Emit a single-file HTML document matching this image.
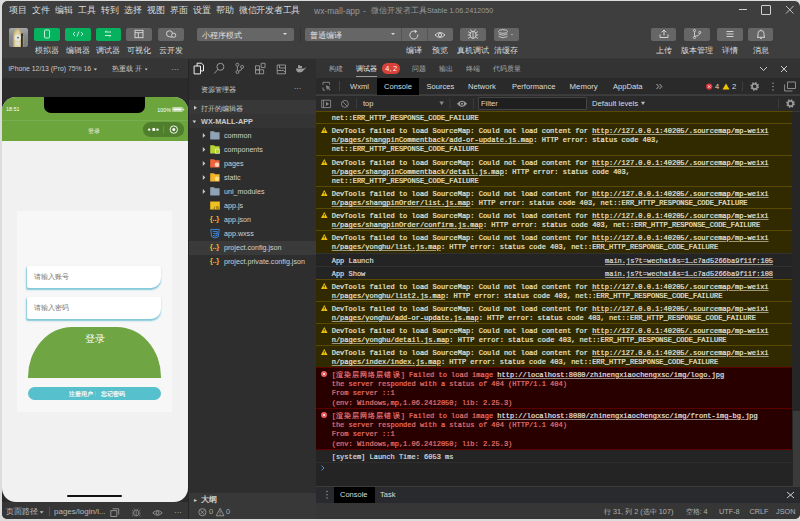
<!DOCTYPE html>
<html><head><meta charset="utf-8">
<style>
*{margin:0;padding:0;box-sizing:border-box}
html,body{width:800px;height:521px;overflow:hidden;background:#dcdcdc;font-family:"Liberation Sans",sans-serif;position:relative}
.a{position:absolute}
.t{position:absolute;white-space:nowrap;color:#dadada;font-size:8.5px;line-height:10px}
.btn{position:absolute;top:27px;height:14px;width:26px;border-radius:2px;background:#666}
.g{background:#07b25f}
.lbl{position:absolute;top:45.8px;font-size:7.7px;line-height:10px;color:#dcdcdc;white-space:nowrap}
.m{position:absolute;white-space:pre;font-family:"Liberation Mono",monospace;font-size:7px;line-height:9.3px;-webkit-text-stroke:0.2px}
.w{color:#ebe8da}
.e{color:#e47474}
.i{color:#dcdcdc}
u{text-decoration:underline;text-decoration-color:rgba(230,223,198,.6);text-underline-offset:1px}
.e u{color:#e2e2e2;text-decoration-color:rgba(220,220,220,.6)}
.cj{letter-spacing:1.1px}
svg{position:absolute;overflow:visible}
.dt{position:absolute;white-space:nowrap;color:#dcdcdc;font-size:7.5px;line-height:10px}
.ft{position:absolute;white-space:nowrap;color:#cccccc;font-size:8px;line-height:10px}
</style></head>
<body>

<div style="position:absolute;left:0;top:0;width:800px;height:521px;clip-path:inset(1px 0px 2px 2px round 5px)">
<div class="a" style="left:2px;top:1px;width:798px;height:518px;background:#3e3e3e;border-radius:5px;overflow:hidden">
</div>
<div class="t" style="left:9px;top:5px;letter-spacing:-0.3px">项目</div>
<div class="t" style="left:32px;top:5px;letter-spacing:-0.3px">文件</div>
<div class="t" style="left:55px;top:5px;letter-spacing:-0.3px">编辑</div>
<div class="t" style="left:78px;top:5px;letter-spacing:-0.3px">工具</div>
<div class="t" style="left:101px;top:5px;letter-spacing:-0.3px">转到</div>
<div class="t" style="left:124px;top:5px;letter-spacing:-0.3px">选择</div>
<div class="t" style="left:147px;top:5px;letter-spacing:-0.3px">视图</div>
<div class="t" style="left:170px;top:5px;letter-spacing:-0.3px">界面</div>
<div class="t" style="left:193px;top:5px;letter-spacing:-0.3px">设置</div>
<div class="t" style="left:216px;top:5px;letter-spacing:-0.3px">帮助</div>
<div class="t" style="left:239px;top:5px;letter-spacing:-0.3px">微信开发者工具</div>
<div class="t" style="left:314px;top:5.5px;color:#9a9a9a">wx-mall-app</div><div class="t" style="left:363px;top:5.5px;color:#9a9a9a">-</div><div class="t" style="left:371px;top:6px;color:#9a9a9a;font-size:7.5px">微信开发者工具</div><div class="t" style="left:427px;top:6px;color:#9a9a9a;font-size:7.2px">Stable 1.06.2412050</div>
<div class="a" style="left:739px;top:9px;width:8px;height:1px;background:#d0d0d0"></div>
<div class="a" style="left:761px;top:5px;width:10px;height:10px;border:1px solid #d0d0d0;border-radius:1px"></div>
<svg style="left:785.5px;top:6px" width="8" height="8"><path d="M0 0L7.5 7.5M7.5 0L0 7.5" stroke="#d0d0d0" stroke-width="0.9"/></svg>
<div class="a" style="left:8.8px;top:27.5px;width:19px;height:19px;border-radius:2px;overflow:hidden;background:linear-gradient(180deg,#a8a8a8,#8a8a8a 40%,#7c7c7c)"><svg style="left:0;top:0" width="19" height="19"><path d="M4.3 19V6Q5.5 1 8.7 0Q11.5 1 12.4 6V19Z" fill="#c9b37a"/><path d="M5.5 19V7Q6.5 3 8.7 2Q10.5 3 11.4 7V19Z" fill="#ddd0a0"/><circle cx="8.7" cy="9.7" r="3.2" fill="#e6e6e0"/><circle cx="9" cy="9.6" r="0.9" fill="#555"/><ellipse cx="8.7" cy="15.5" rx="2.6" ry="2" fill="#e0ddd0"/><path d="M12.2 5.5H13.8V19H12.2Z" fill="#151515"/><path d="M13.8 8H14.6V19H13.8Z" fill="#b09a60"/></svg></div>
<div class="btn g" style="left:34px;top:27.5px;width:26px;height:13.5px"></div>
<svg style="left:32.0px;top:19.25px" width="30" height="30"><g transform="translate(15 15)"><rect x="-2.5" y="-4" width="5" height="8" rx="1" fill="none" stroke="#d9f5e6" stroke-width="0.9"/></g></svg>
<div class="lbl" style="left:22.0px;width:50px;text-align:center">模拟器</div>
<div class="btn g" style="left:65px;top:27.5px;width:25.5px;height:13.5px"></div>
<svg style="left:62.75px;top:19.25px" width="30" height="30"><g transform="translate(15 15)"><path d="M-3 -2L-5 0L-3 2M3 -2L5 0L3 2M1 -2.5L-1 2.5" fill="none" stroke="#d9f5e6" stroke-width="0.9"/></g></svg>
<div class="lbl" style="left:52.75px;width:50px;text-align:center">编辑器</div>
<div class="btn g" style="left:95.6px;top:27.5px;width:25.5px;height:13.5px"></div>
<svg style="left:93.35px;top:19.25px" width="30" height="30"><g transform="translate(15 15)"><path d="M-3 -2H3M-3 -2L-1.5 -3.2M3 1.5H-3M3 1.5L1.5 2.7" fill="none" stroke="#d9f5e6" stroke-width="0.9"/></g></svg>
<div class="lbl" style="left:83.35px;width:50px;text-align:center">调试器</div>
<div class="btn" style="left:126.2px;top:27.5px;width:25.6px;height:13.5px"></div>
<svg style="left:124.0px;top:19.25px" width="30" height="30"><g transform="translate(15 15)"><rect x="-4" y="-3.7" width="8" height="7.4" fill="none" stroke="#ddd" stroke-width="0.9"/><path d="M-4 -1.3H4M-0.7 -1.3V3.7" stroke="#ddd" stroke-width="0.9"/></g></svg>
<div class="lbl" style="left:114.0px;width:50px;text-align:center">可视化</div>
<div class="btn" style="left:158px;top:27.5px;width:25.6px;height:13.5px"></div>
<svg style="left:155.8px;top:19.25px" width="30" height="30"><g transform="translate(15 15)"><path d="M-1.3 2.75A3 3 0 1 1 1.5 -0.2" fill="none" stroke="#ddd" stroke-width="0.9"/><circle cx="2.7" cy="1.25" r="2.1" fill="none" stroke="#ddd" stroke-width="0.9"/><path d="M-1.3 2.75L1 3.3" stroke="#ddd" stroke-width="0.9"/></g></svg>
<div class="lbl" style="left:145.8px;width:50px;text-align:center">云开发</div>
<div class="a" style="left:197px;top:27.7px;width:97px;height:13.5px;border-radius:2px;background:#666"></div>
<div class="t" style="left:202px;top:31px;color:#e0e0e0;font-size:7.7px">小程序模式</div>
<div class="a" style="left:300px;top:27px;width:0.8px;height:15px;background:#353535"></div>
<div class="a" style="left:283px;top:33px;border-left:2px solid transparent;border-right:2px solid transparent;border-top:2px solid #ddd"></div>
<div class="a" style="left:304.5px;top:27.7px;width:148px;height:13.3px;border-radius:2px;background:#666"></div>
<div class="a" style="left:401px;top:27.7px;width:0.7px;height:13.3px;background:#555"></div>
<div class="a" style="left:427px;top:27.7px;width:0.7px;height:13.3px;background:#555"></div>
<div class="t" style="left:310px;top:31px;color:#e0e0e0;font-size:7.7px">普通编译</div>
<div class="a" style="left:391px;top:33px;border-left:2px solid transparent;border-right:2px solid transparent;border-top:2px solid #ddd"></div>
<svg style="left:399px;top:19.5px" width="30" height="30"><g transform="translate(15 15)"><path d="M3.8 -0.5A4 4 0 1 1 1.5 -3.6" fill="none" stroke="#ddd" stroke-width="0.9"/><path d="M0.8 -5.2L3.2 -3.4L0.8 -1.8Z" fill="#ddd"/></g></svg>
<svg style="left:425px;top:19.799999999999997px" width="30" height="30"><g transform="translate(15 15)"><path d="M-5 0Q0 -5 5 0Q0 5 -5 0Z" fill="none" stroke="#ddd" stroke-width="0.9"/><circle cx="0" cy="0" r="1.6" fill="none" stroke="#ddd" stroke-width="0.9"/></g></svg>
<div class="lbl" style="left:389px;width:50px;text-align:center">编译</div>
<div class="lbl" style="left:415px;width:50px;text-align:center">预览</div>
<div class="btn" style="left:460.3px;top:27.7px;width:25.5px;height:13.3px"></div>
<svg style="left:458.05px;top:19.35px" width="30" height="30"><g transform="translate(15 15)"><ellipse cx="0" cy="0.8" rx="3" ry="3.6" fill="none" stroke="#ddd" stroke-width="0.9"/><path d="M0 -2.5V4.4M-3 -1L-5 -2.5M3 -1L5 -2.5M-3 1H-5.2M3 1H5.2M-3 3L-5 4.5M3 3L5 4.5M-1.5 -3L-2.5 -4.5M1.5 -3L2.5 -4.5" stroke="#ddd" stroke-width="0.8" fill="none"/></g></svg>
<div class="lbl" style="left:448.05px;width:50px;text-align:center">真机调试</div>
<div class="btn" style="left:493.7px;top:27.7px;width:25.5px;height:13.3px"></div>
<svg style="left:488px;top:19.4px" width="30" height="30"><g transform="translate(15 15)"><ellipse cx="0" cy="-2.5" rx="4.5" ry="1.8" fill="none" stroke="#ddd" stroke-width="0.8"/><path d="M-4.5 0Q0 2.5 4.5 0M-4.5 2.5Q0 5 4.5 2.5" fill="none" stroke="#ddd" stroke-width="0.8"/></g></svg>
<div class="lbl" style="left:481.45px;width:50px;text-align:center">清缓存</div>
<div class="a" style="left:511px;top:33.5px;border-left:1.5px solid transparent;border-right:1.5px solid transparent;border-top:1.8px solid #ddd"></div>
<div class="btn" style="left:651px;top:27.5px;width:25.4px;height:13.5px"></div>
<svg style="left:648.7px;top:19.25px" width="30" height="30"><g transform="translate(15 15)"><path d="M0 1.5V-4M-2.2 -1.8L0 -4L2.2 -1.8M-4 0.5V3.5H4V0.5" fill="none" stroke="#ddd" stroke-width="0.9"/></g></svg>
<div class="lbl" style="left:638.7px;width:50px;text-align:center">上传</div>
<div class="btn" style="left:684px;top:27.5px;width:25.6px;height:13.5px"></div>
<svg style="left:681.8px;top:19.25px" width="30" height="30"><g transform="translate(15 15)"><circle cx="-2.5" cy="-3.5" r="1.1" fill="none" stroke="#ddd" stroke-width="0.8"/><circle cx="-2.5" cy="3.5" r="1.1" fill="none" stroke="#ddd" stroke-width="0.8"/><circle cx="2.8" cy="-1.5" r="1.1" fill="none" stroke="#ddd" stroke-width="0.8"/><path d="M-2.5 -2.4V2.4M2.8 -0.4Q2.5 2 -2.3 2.4" fill="none" stroke="#ddd" stroke-width="0.8"/></g></svg>
<div class="lbl" style="left:671.8px;width:50px;text-align:center">版本管理</div>
<div class="btn" style="left:717px;top:27.5px;width:26px;height:13.5px"></div>
<svg style="left:715.0px;top:19.25px" width="30" height="30"><g transform="translate(15 15)"><path d="M-3.5 -2.5H3.5M-3.5 0H3.5M-3.5 2.5H3.5" stroke="#ddd" stroke-width="0.9"/></g></svg>
<div class="lbl" style="left:705.0px;width:50px;text-align:center">详情</div>
<div class="btn" style="left:748px;top:27.5px;width:25.4px;height:13.5px"></div>
<svg style="left:745.7px;top:19.25px" width="30" height="30"><g transform="translate(15 15)"><path d="M-3 2.5V-0.5A3 3 0 0 1 3 -0.5V2.5L4 3.3H-4Z M-1 4.3H1" fill="none" stroke="#ddd" stroke-width="0.9"/><path d="M0 -3.5V-4.3" stroke="#ddd" stroke-width="0.9"/></g></svg>
<div class="lbl" style="left:735.7px;width:50px;text-align:center">消息</div>
<div class="a" style="left:2px;top:58px;width:798px;height:1px;background:#383838"></div>
<div class="a" style="left:2px;top:59px;width:186px;height:19.5px;background:#353535"></div>
<div class="a" style="left:2px;top:78px;width:186px;height:424px;background:#2b2b2b"></div>
<div class="ft" style="left:8.6px;top:64.2px;color:#c8c8c8;font-size:6.85px">iPhone 12/13 (Pro) 75% 16</div>
<svg style="left:0;top:0" width="800" height="521"><path d="M93.6 68.6H97.2L95.4 70.6Z" fill="#c8c8c8"/><path d="M144.8 68.6H147.6L146.2 70.6Z" fill="#c8c8c8"/><path d="M39.6 511.2H43.6L41.6 513.4Z" fill="#bbb"/></svg>
<div class="ft" style="left:112px;top:64.3px;color:#c8c8c8;font-size:7px">热重载 开</div>
<div class="ft" style="left:171px;top:65px;color:#c8c8c8">···</div>
<div class="a" style="left:2px;top:97px;width:186px;height:405px;background:#f1f1f1;border-radius:14px;overflow:hidden">
<div class="a" style="left:0;top:0;width:186px;height:44px;background:#6ba53c"></div>
<div class="a" style="left:0;top:23px;width:186px;height:1px;background:#78ad50"></div>
</div>
<div class="a" style="left:44px;top:97px;width:101px;height:16px;background:#000;border-radius:0 0 7px 7px"></div>
<div class="a" style="left:6px;top:105.2px;font-size:5.4px;color:#fff;line-height:8px">18:51</div>
<div class="a" style="left:157.3px;top:105.5px;font-size:5.3px;color:#fff;line-height:8px">100%</div>
<svg style="left:0;top:0" width="800" height="521"><rect x="172.3" y="107.5" width="10.4" height="3.9" rx="0.8" fill="none" stroke="#fff" stroke-width="0.6"/><rect x="173.2" y="108.3" width="8.6" height="2.3" fill="#fff"/><path d="M183.2 108.5L184.6 109.45L183.2 110.4Z" fill="#fff"/></svg>
<div class="a" style="left:88px;top:126.5px;font-size:6.4px;color:#fff;line-height:8px">登录</div>
<div class="a" style="left:143.1px;top:122.3px;width:41.1px;height:14.5px;background:#4f7e2c;border-radius:7.3px"></div>
<svg style="left:0;top:0" width="800" height="521"><circle cx="149.2" cy="129.6" r="1.2" fill="#fff"/><rect x="152.3" y="128.1" width="2.9" height="2.9" rx="0.7" fill="#fff"/><circle cx="157.5" cy="129.6" r="1.2" fill="#fff"/><path d="M163.5 125.8V133.8" stroke="#7a9e5c" stroke-width="0.6"/><circle cx="173.8" cy="129.6" r="3.7" fill="none" stroke="#fff" stroke-width="0.9"/><circle cx="173.8" cy="129.6" r="1.5" fill="#fff"/></svg>
<div class="a" style="left:16.5px;top:210.5px;width:155.8px;height:201px;background:#f7f7f7"></div>
<div class="a" style="left:27px;top:266px;width:134px;height:22px;background:#fff;border-radius:2px 2px 10px 2px;box-shadow:-0.5px 1.5px 1.5px rgba(90,185,205,.75)"></div>
<div class="a" style="left:34px;top:272px;font-size:7px;color:#777;line-height:10px">请输入账号</div>
<div class="a" style="left:27px;top:297px;width:134px;height:22px;background:#fff;border-radius:2px 2px 10px 2px;box-shadow:-0.5px 1.5px 1.5px rgba(90,185,205,.75)"></div>
<div class="a" style="left:34px;top:303px;font-size:7px;color:#777;line-height:10px">请输入密码</div>
<div class="a" style="left:28px;top:327px;width:133px;height:51px;background:#6fa542;border-radius:44px 44px 0 0/50px 50px 0 0"></div>
<div class="a" style="left:85px;top:333px;font-size:10px;color:#fff;line-height:12px">登录</div>
<div class="a" style="left:28px;top:387px;width:133px;height:13px;background:#56c0cc;border-radius:7px"></div>
<div class="a" style="left:68.5px;top:390px;font-size:5.7px;color:#fff;line-height:8px;font-weight:bold">注册用户</div>
<div class="a" style="left:95.2px;top:390.5px;width:0.7px;height:6.5px;background:#9ab8bc"></div>
<div class="a" style="left:101px;top:390px;font-size:5.7px;color:#fff;line-height:8px;font-weight:bold">忘记密码</div>
<div class="a" style="left:67px;top:495px;width:55px;height:2px;background:#111;border-radius:1px"></div>
<div class="a" style="left:2px;top:502px;width:186px;height:17px;background:#363636"></div>
<div class="ft" style="left:6px;top:507px;color:#bbb;font-size:7.8px">页面路径</div>
<svg style="left:0;top:0" width="800" height="521"><path d="M39.6 511.2H43.6L41.6 513.4Z" fill="#bbb"/></svg>
<div class="a" style="left:49px;top:507px;width:1px;height:9px;background:#555"></div>
<div class="ft" style="left:54px;top:507px;color:#bbb">pages/login/l...</div>
<div class="ft" style="left:174px;top:507.5px;color:#bbb">···</div>
<svg style="left:0;top:0" width="800" height="521"><path d="M112.5 508.8H118.7V514.5M110.8 510.6H116.8V516.5H110.8Z" fill="none" stroke="#9a9a9a" stroke-width="0.9"/><g transform="translate(136.2 512.3) scale(0.85)"><ellipse cx="0" cy="0.8" rx="3" ry="3.6" fill="none" stroke="#9a9a9a" stroke-width="0.9"/><path d="M0 -2.5V4.4M-3 -1L-5 -2.5M3 -1L5 -2.5M-3 1H-5.2M3 1H5.2M-3 3L-5 4.5M3 3L5 4.5M-1.5 -3L-2.5 -4.5M1.5 -3L2.5 -4.5" stroke="#9a9a9a" stroke-width="0.8" fill="none"/></g><g transform="translate(157.5 512.9) scale(0.95)"><path d="M-5 0Q0 -5 5 0Q0 5 -5 0Z" fill="none" stroke="#9a9a9a" stroke-width="0.9"/><circle cx="0" cy="0" r="1.6" fill="none" stroke="#9a9a9a" stroke-width="0.9"/></g></svg>
<div class="a" style="left:188px;top:59px;width:1px;height:460px;background:#262626"></div>
<div class="a" style="left:189px;top:59px;width:127px;height:460px;background:#2e2e2e"></div>
<div class="a" style="left:189px;top:100px;width:127px;height:14px;background:#383838"></div>
<div class="a" style="left:189px;top:114px;width:127px;height:14px;background:#343434"></div>
<div class="ft" style="left:201px;top:84.5px;font-size:7.2px">资源管理器</div>
<div class="ft" style="left:294px;top:84px;font-size:7px">···</div>
<svg style="left:0;top:0" width="800" height="521"><path d="M194 105.8L197 107.8L194 109.8Z" fill="#c8c8c8"/><path d="M192.5 120.5H196.2L194.35 123.2Z" fill="#c8c8c8"/></svg>
<div class="ft" style="left:201px;top:103.8px;font-size:7.2px">打开的编辑器</div>
<div class="ft" style="left:201px;top:116.8px;font-weight:bold;font-size:7.3px">WX-MALL-APP</div>
<svg style="left:0;top:0" width="800" height="521"><path d="M197.1 66V63.2H201.5L203.5 65.2V70.9H200.5" fill="none" stroke="#eee" stroke-width="1"/><path d="M194.1 66H200.5V73.9H194.1Z" fill="none" stroke="#eee" stroke-width="1"/><circle cx="220.4" cy="66.8" r="3.5" fill="none" stroke="#9a9a9a" stroke-width="1"/><path d="M217.9 69.3L214.4 73.5" stroke="#9a9a9a" stroke-width="1"/><circle cx="237.4" cy="64.7" r="1.5" fill="none" stroke="#9a9a9a" stroke-width="0.9"/><circle cx="237.4" cy="72" r="1.5" fill="none" stroke="#9a9a9a" stroke-width="0.9"/><circle cx="242.1" cy="66.9" r="1.5" fill="none" stroke="#9a9a9a" stroke-width="0.9"/><path d="M237.4 66.2V70.5M242.1 68.4Q242 70.5 238.5 71" fill="none" stroke="#9a9a9a" stroke-width="0.9"/><path d="M255.5 65.8H259.5V69.8H255.5ZM255.5 69.8H259.5V73.8H255.5ZM259.5 69.8H263.6V73.8H259.5ZM261.2 63.3H265V67.6H261.2Z" fill="none" stroke="#9a9a9a" stroke-width="0.9"/><path d="M277.2 65H285.5V73.8H277.2Z M279.5 65V68H285.5 M277.2 70.5H283.5L285.5 72.5" fill="none" stroke="#9a9a9a" stroke-width="0.9"/><path d="M296 68.5H304.5Q305 67 306 67.5Q305.5 69 304.5 69.5Q302.5 72.5 299 72.4Q296 72 296 68.5Z M298 68H302V66H300V65.2H298Z" fill="#9a9a9a"/></svg>
<svg style="left:0;top:0" width="800" height="521"><path d="M202.8 133.1L205.3 135.6L202.8 138.1Z" fill="#c8c8c8"/><path d="M210.2 131.3H214L215 132.3H219.6V139.4H210.2Z" fill="#8fa3b5"/>
</svg>
<div class="ft" style="left:224px;top:131.4px;font-size:7.15px;color:#d0d0d0">common</div>
<svg style="left:0;top:0" width="800" height="521"><path d="M202.8 147.1L205.3 149.6L202.8 152.1Z" fill="#c8c8c8"/><path d="M210.2 145.3H214L215 146.3H219.6V153.4H210.2Z" fill="#b7d432"/>
<path d="M215.5 149.1H219.5V153.4H215.5Z" fill="none" stroke="#fff" stroke-width="0.6"/>
</svg>
<div class="ft" style="left:224px;top:145.4px;font-size:7.15px;color:#d0d0d0">components</div>
<svg style="left:0;top:0" width="800" height="521"><path d="M202.8 161.1L205.3 163.6L202.8 166.1Z" fill="#c8c8c8"/><path d="M210.2 159.3H214L215 160.3H219.6V167.4H210.2Z" fill="#f0643c"/>
<circle cx="217" cy="164.8" r="2.3" fill="#fbd1c0"/>
</svg>
<div class="ft" style="left:224px;top:159.4px;font-size:7.15px;color:#d0d0d0">pages</div>
<svg style="left:0;top:0" width="800" height="521"><path d="M202.8 175.1L205.3 177.6L202.8 180.1Z" fill="#c8c8c8"/><path d="M210.2 173.3H214L215 174.3H219.6V181.4H210.2Z" fill="#f5b32a"/>
<circle cx="217" cy="178.8" r="2.2" fill="#ffe08a"/>
</svg>
<div class="ft" style="left:224px;top:173.4px;font-size:7.15px;color:#d0d0d0">static</div>
<svg style="left:0;top:0" width="800" height="521"><path d="M202.8 189.1L205.3 191.6L202.8 194.1Z" fill="#c8c8c8"/><path d="M210.2 187.3H214L215 188.3H219.6V195.4H210.2Z" fill="#8fa3b5"/>
</svg>
<div class="ft" style="left:224px;top:187.4px;font-size:7.15px;color:#d0d0d0">uni_modules</div>
<svg style="left:0;top:0" width="800" height="521"><path d="M210.2 201.6H219.8V209.6H210.2Z" fill="#f0c020"/><path d="M214.5 206.6V208.6H213.3M218.5 206.6H216.3V207.6H218.5V208.6H216.3" fill="none" stroke="#6a5000" stroke-width="0.5"/></svg>
<div class="ft" style="left:224px;top:201.4px;font-size:7.15px;color:#d0d0d0">app.js</div>
<div class="ft" style="left:209.8px;top:214.1px;color:#f0b429;font-size:7.8px;font-weight:bold;letter-spacing:-0.3px">{..}</div>
<div class="ft" style="left:224px;top:215.4px;font-size:7.15px;color:#d0d0d0">app.json</div>
<svg style="left:0;top:0" width="800" height="521"><path d="M210.8 229.4H219.2L218.4 236.6L215 238.0L211.6 236.6Z" fill="none" stroke="#3d8eea" stroke-width="0.9"/><path d="M212.8 231.4H217.2L217 235.4L215 236.1L213 235.4M213.2 233.6H217" fill="none" stroke="#3d8eea" stroke-width="0.9"/></svg>
<div class="ft" style="left:224px;top:229.4px;font-size:7.15px;color:#d0d0d0">app.wxss</div>
<div class="a" style="left:189px;top:240.6px;width:127px;height:14px;background:#3a3a3a"></div>
<div class="ft" style="left:209.8px;top:242.1px;color:#f0b429;font-size:7.8px;font-weight:bold;letter-spacing:-0.3px">{..}</div>
<div class="ft" style="left:224px;top:243.4px;font-size:7.15px;color:#d0d0d0">project.config.json</div>
<div class="ft" style="left:209.8px;top:256.1px;color:#f0b429;font-size:7.8px;font-weight:bold;letter-spacing:-0.3px">{..}</div>
<div class="ft" style="left:224px;top:257.4px;font-size:7.15px;color:#d0d0d0">project.private.config.json</div>
<div class="a" style="left:189px;top:493px;width:127px;height:14px;background:#383838"></div>
<div class="ft" style="left:194px;top:495px;font-size:6px">▸</div>
<div class="ft" style="left:201px;top:495px;font-weight:bold">大纲</div>
<div class="a" style="left:189px;top:507px;width:127px;height:12px;background:#383838"></div>
<svg style="left:0;top:0" width="800" height="521"><circle cx="202.4" cy="512.2" r="3.6" fill="none" stroke="#9a9a9a" stroke-width="0.9"/><path d="M200.6 510.4L204.2 514M204.2 510.4L200.6 514" stroke="#9a9a9a" stroke-width="0.9"/><path d="M220.1 508.4L224 515.8H216.2Z" fill="none" stroke="#9a9a9a" stroke-width="0.9"/><path d="M220.1 510.8V513.3M220.1 514V514.8" stroke="#9a9a9a" stroke-width="0.8"/></svg>
<div class="ft" style="left:209px;top:507px;color:#aaa;font-size:7.5px">0</div>
<div class="ft" style="left:226px;top:507px;color:#aaa;font-size:7.5px">0</div>
<div class="a" style="left:316px;top:59px;width:484px;height:19px;background:#333"></div>
<div class="ft" style="left:329px;top:63.5px;color:#aaa;font-size:7px">构建</div>
<div class="ft" style="left:356px;top:63.5px;color:#eee;font-size:7px">调试器</div>
<div class="ft" style="left:412px;top:63.5px;color:#aaa;font-size:7px">问题</div>
<div class="ft" style="left:439px;top:63.5px;color:#aaa;font-size:7px">输出</div>
<div class="ft" style="left:466px;top:63.5px;color:#aaa;font-size:7px">终端</div>
<div class="ft" style="left:493px;top:63.5px;color:#aaa;font-size:7px">代码质量</div>
<div class="a" style="left:355.6px;top:76px;width:21.4px;height:1.3px;background:#999"></div>
<div class="a" style="left:382px;top:63px;width:17.6px;height:10.6px;background:#d8413b;border-radius:5.3px"></div>
<div class="ft" style="left:385.3px;top:63.5px;color:#fff;font-size:7.3px;word-spacing:-1px;letter-spacing:0.2px">4, 2</div>
<svg style="left:760px;top:67px" width="7" height="4"><path d="M0 0L3.5 3.5L7 0" stroke="#ccc" fill="none" stroke-width="1"/></svg>
<svg style="left:781px;top:66px" width="6" height="6"><path d="M0 0L6 6M6 0L0 6" stroke="#ccc" stroke-width="1"/></svg>
<div class="a" style="left:316px;top:78px;width:484px;height:17px;background:#2a2a2b;border-bottom:1px solid #3a3a3a"></div>
<div class="a" style="left:377px;top:78px;width:42px;height:17px;background:#000"></div>
<div class="a" style="left:338.5px;top:81px;width:0.8px;height:10px;background:#444"></div>
<div class="dt" style="left:350px;top:82px;font-size:7.6px">Wxml</div>
<div class="dt" style="left:384px;top:82px;font-size:7.6px">Console</div>
<div class="dt" style="left:426.4px;top:82px;font-size:7.6px">Sources</div>
<div class="dt" style="left:468px;top:82px;font-size:7.6px">Network</div>
<div class="dt" style="left:512px;top:82px;font-size:7.6px">Performance</div>
<div class="dt" style="left:569.6px;top:82px;font-size:7.8px">Memory</div>
<div class="dt" style="left:613px;top:82px;font-size:7.6px">AppData</div>
<svg style="left:0;top:0" width="800" height="521"><path d="M323 85V82.3H329.5V84.5M323 87.5V90.2H325" fill="none" stroke="#8a8a8a" stroke-width="0.9"/><path d="M325.8 85.3L330.5 87L328.6 87.8L330.6 89.8L329.8 90.6L327.8 88.6L327 90.5Z" fill="#8a8a8a"/><path d="M656.5 84L658.8 86.5L656.5 89M659.5 84L661.8 86.5L659.5 89" fill="none" stroke="#bbb" stroke-width="0.9"/><circle cx="709.2" cy="86.6" r="3.1" fill="#e4343c"/><path d="M708 85.4L710.4 87.8M710.4 85.4L708 87.8" stroke="#fff" stroke-width="0.8"/><path d="M726 83.6L729.5 89.4H722.5Z" fill="#f5c400"/><path d="M742.5 81.5V91" stroke="#444" stroke-width="0.8"/><circle cx="754.7" cy="86.4" r="3.3" fill="none" stroke="#9a9a9a" stroke-width="2.2" stroke-dasharray="1.3 1.29"/><circle cx="754.7" cy="86.4" r="2.6" fill="none" stroke="#9a9a9a" stroke-width="1.6"/><circle cx="773" cy="83.2" r="0.75" fill="#9a9a9a"/><circle cx="773" cy="86.6" r="0.75" fill="#9a9a9a"/><circle cx="773" cy="90" r="0.75" fill="#9a9a9a"/><path d="M787.5 82H795.5V88.5H787.5Z" fill="none" stroke="#8a8a8a" stroke-width="1"/><path d="M784.6 84.5V91H792.5" fill="none" stroke="#8a8a8a" stroke-width="1"/></svg>
<div class="dt" style="left:715px;top:82px;">4</div>
<div class="dt" style="left:732px;top:82px;">2</div>
<div class="a" style="left:316px;top:95.5px;width:484px;height:16.5px;background:#2a2a2b;border-bottom:1px solid #3a3a3a"></div>
<svg style="left:0;top:0" width="800" height="521"><path d="M321.7 100.2H330.6V107.6H321.7Z M323.6 100.2V107.6" fill="none" stroke="#8a8a8a" stroke-width="0.9"/><path d="M326 101.8L329 103.9L326 106Z" fill="#8a8a8a"/><circle cx="344.9" cy="103.9" r="3.5" fill="none" stroke="#8a8a8a" stroke-width="0.9"/><path d="M342.4 101.4L347.4 106.4" stroke="#8a8a8a" stroke-width="0.9"/><path d="M356.5 98.5V109M449.9 98.5V109M473.4 98.5V109M778.5 98.5V109" stroke="#404040" stroke-width="0.8"/><path d="M439.4 101.5H443.9L441.65 105.2Z" fill="#8a8a8a"/><path d="M456.9 103.75Q462 97.5 467.1 103.75Q462 110 456.9 103.75Z" fill="#9a9a9a"/><circle cx="462" cy="103.75" r="2.1" fill="#2a2a2b"/><circle cx="462" cy="103.75" r="1.1" fill="#9a9a9a"/><circle cx="790.5" cy="103.6" r="3.3" fill="none" stroke="#9a9a9a" stroke-width="2.2" stroke-dasharray="1.3 1.29"/><circle cx="790.5" cy="103.6" r="2.6" fill="none" stroke="#9a9a9a" stroke-width="1.6"/></svg>
<div class="dt" style="left:363px;top:98.5px;">top</div>
<div class="a" style="left:478px;top:97.4px;width:108.5px;height:12.6px;background:#1f1f1f;border:1px solid #454545;border-radius:1px"></div>
<div class="dt" style="left:481px;top:99px;">Filter</div>
<div class="dt" style="left:592px;top:99px;font-size:7.7px">Default levels</div>
<svg style="left:0;top:0" width="800" height="521"><path d="M641 101.8H645L643 105Z" fill="#bbb"/></svg>
<div class="a" style="left:316px;top:112px;width:476px;height:374px;background:#242424"></div>
<div class="a" style="left:792px;top:112px;width:8px;height:374px;background:#262626"></div>
<div class="a" style="left:793px;top:411px;width:7px;height:75px;background:#3a3a3a"></div>
<div class="a" style="left:316px;top:111px;width:476px;height:12px;background:#312a00;border-top:1px solid #5a4a00"></div>
<div class="m w" style="left:331.7px;top:114.1px">net::ERR_HTTP_RESPONSE_CODE_FAILURE</div>
<div class="a" style="left:316px;top:123px;width:476px;height:32px;background:#312a00;border-top:1px solid #5a4a00"></div>
<svg style="left:320.8px;top:126.6px" width="6.5" height="6"><path d="M3.25 0L6.5 6H0Z" fill="#f5c400"/><path d="M3.25 2V4M3.25 4.6V5.3" stroke="#312a00" stroke-width="0.8"/></svg>
<div class="m w" style="left:331.7px;top:126.6px">DevTools failed to load SourceMap: Could not load content for <u>http://127.0.0.1:40205/.sourcemap/mp-weixi</u></div>
<div class="m w" style="left:331.7px;top:135.9px"><u>n/pages/shangpinCommentback/add-or-update.js.map</u>: HTTP error: status code 403,</div>
<div class="m w" style="left:331.7px;top:145.2px">net::ERR_HTTP_RESPONSE_CODE_FAILURE</div>
<div class="a" style="left:316px;top:155px;width:476px;height:31px;background:#312a00;border-top:1px solid #5a4a00"></div>
<svg style="left:320.8px;top:158.6px" width="6.5" height="6"><path d="M3.25 0L6.5 6H0Z" fill="#f5c400"/><path d="M3.25 2V4M3.25 4.6V5.3" stroke="#312a00" stroke-width="0.8"/></svg>
<div class="m w" style="left:331.7px;top:158.6px">DevTools failed to load SourceMap: Could not load content for <u>http://127.0.0.1:40205/.sourcemap/mp-weixi</u></div>
<div class="m w" style="left:331.7px;top:167.9px"><u>n/pages/shangpinCommentback/detail.js.map</u>: HTTP error: status code 403,</div>
<div class="m w" style="left:331.7px;top:177.2px">net::ERR_HTTP_RESPONSE_CODE_FAILURE</div>
<div class="a" style="left:316px;top:186px;width:476px;height:22px;background:#312a00;border-top:1px solid #5a4a00"></div>
<svg style="left:320.8px;top:190.1px" width="6.5" height="6"><path d="M3.25 0L6.5 6H0Z" fill="#f5c400"/><path d="M3.25 2V4M3.25 4.6V5.3" stroke="#312a00" stroke-width="0.8"/></svg>
<div class="m w" style="left:331.7px;top:190.1px">DevTools failed to load SourceMap: Could not load content for <u>http://127.0.0.1:40205/.sourcemap/mp-weixi</u></div>
<div class="m w" style="left:331.7px;top:199.4px"><u>n/pages/shangpinOrder/list.js.map</u>: HTTP error: status code 403, net::ERR_HTTP_RESPONSE_CODE_FAILURE</div>
<div class="a" style="left:316px;top:208px;width:476px;height:22px;background:#312a00;border-top:1px solid #5a4a00"></div>
<svg style="left:320.8px;top:211.6px" width="6.5" height="6"><path d="M3.25 0L6.5 6H0Z" fill="#f5c400"/><path d="M3.25 2V4M3.25 4.6V5.3" stroke="#312a00" stroke-width="0.8"/></svg>
<div class="m w" style="left:331.7px;top:211.6px">DevTools failed to load SourceMap: Could not load content for <u>http://127.0.0.1:40205/.sourcemap/mp-weixi</u></div>
<div class="m w" style="left:331.7px;top:220.9px"><u>n/pages/shangpinOrder/confirm.js.map</u>: HTTP error: status code 403, net::ERR_HTTP_RESPONSE_CODE_FAILURE</div>
<div class="a" style="left:316px;top:230px;width:476px;height:23px;background:#312a00;border-top:1px solid #5a4a00"></div>
<svg style="left:320.8px;top:233.6px" width="6.5" height="6"><path d="M3.25 0L6.5 6H0Z" fill="#f5c400"/><path d="M3.25 2V4M3.25 4.6V5.3" stroke="#312a00" stroke-width="0.8"/></svg>
<div class="m w" style="left:331.7px;top:233.6px">DevTools failed to load SourceMap: Could not load content for <u>http://127.0.0.1:40205/.sourcemap/mp-weixi</u></div>
<div class="m w" style="left:331.7px;top:242.9px"><u>n/pages/yonghu/list.js.map</u>: HTTP error: status code 403, net::ERR_HTTP_RESPONSE_CODE_FAILURE</div>
<div class="a" style="left:316px;top:253px;width:476px;height:13px;background:#242424;border-top:1px solid #313131"></div>
<div class="m i" style="left:331.7px;top:256.6px">App Launch</div>
<div class="m i" style="left:605px;top:256.6px"><u>main.js?t=wechat&amp;s=1…c7ad5266ba9f11f:105</u></div>
<div class="a" style="left:316px;top:266px;width:476px;height:13px;background:#242424;border-top:1px solid #313131"></div>
<div class="m i" style="left:331.7px;top:269.6px">App Show</div>
<div class="m i" style="left:605px;top:269.6px"><u>main.js?t=wechat&amp;s=1…c7ad5266ba9f11f:108</u></div>
<div class="a" style="left:316px;top:279px;width:476px;height:22px;background:#312a00;border-top:1px solid #5a4a00"></div>
<svg style="left:320.8px;top:282.6px" width="6.5" height="6"><path d="M3.25 0L6.5 6H0Z" fill="#f5c400"/><path d="M3.25 2V4M3.25 4.6V5.3" stroke="#312a00" stroke-width="0.8"/></svg>
<div class="m w" style="left:331.7px;top:282.6px">DevTools failed to load SourceMap: Could not load content for <u>http://127.0.0.1:40205/.sourcemap/mp-weixi</u></div>
<div class="m w" style="left:331.7px;top:291.9px"><u>n/pages/yonghu/list2.js.map</u>: HTTP error: status code 403, net::ERR_HTTP_RESPONSE_CODE_FAILURE</div>
<div class="a" style="left:316px;top:301px;width:476px;height:22px;background:#312a00;border-top:1px solid #5a4a00"></div>
<svg style="left:320.8px;top:304.6px" width="6.5" height="6"><path d="M3.25 0L6.5 6H0Z" fill="#f5c400"/><path d="M3.25 2V4M3.25 4.6V5.3" stroke="#312a00" stroke-width="0.8"/></svg>
<div class="m w" style="left:331.7px;top:304.6px">DevTools failed to load SourceMap: Could not load content for <u>http://127.0.0.1:40205/.sourcemap/mp-weixi</u></div>
<div class="m w" style="left:331.7px;top:313.9px"><u>n/pages/yonghu/add-or-update.js.map</u>: HTTP error: status code 403, net::ERR_HTTP_RESPONSE_CODE_FAILURE</div>
<div class="a" style="left:316px;top:323px;width:476px;height:22px;background:#312a00;border-top:1px solid #5a4a00"></div>
<svg style="left:320.8px;top:326.6px" width="6.5" height="6"><path d="M3.25 0L6.5 6H0Z" fill="#f5c400"/><path d="M3.25 2V4M3.25 4.6V5.3" stroke="#312a00" stroke-width="0.8"/></svg>
<div class="m w" style="left:331.7px;top:326.6px">DevTools failed to load SourceMap: Could not load content for <u>http://127.0.0.1:40205/.sourcemap/mp-weixi</u></div>
<div class="m w" style="left:331.7px;top:335.9px"><u>n/pages/yonghu/detail.js.map</u>: HTTP error: status code 403, net::ERR_HTTP_RESPONSE_CODE_FAILURE</div>
<div class="a" style="left:316px;top:345px;width:476px;height:22px;background:#312a00;border-top:1px solid #5a4a00"></div>
<svg style="left:320.8px;top:348.6px" width="6.5" height="6"><path d="M3.25 0L6.5 6H0Z" fill="#f5c400"/><path d="M3.25 2V4M3.25 4.6V5.3" stroke="#312a00" stroke-width="0.8"/></svg>
<div class="m w" style="left:331.7px;top:348.6px">DevTools failed to load SourceMap: Could not load content for <u>http://127.0.0.1:40205/.sourcemap/mp-weixi</u></div>
<div class="m w" style="left:331.7px;top:357.9px"><u>n/pages/index/index.js.map</u>: HTTP error: status code 403, net::ERR_HTTP_RESPONSE_CODE_FAILURE</div>
<div class="a" style="left:316px;top:367px;width:476px;height:41px;background:#290000;border-top:1px solid #5c0000"></div>
<svg style="left:321px;top:371.3px" width="6" height="6"><circle cx="3" cy="3" r="3" fill="#e9555a"/><path d="M1.8 1.8L4.2 4.2M4.2 1.8L1.8 4.2" stroke="#fff" stroke-width="0.8"/></svg>
<div class="m e" style="left:331.7px;top:370.6px">[<span class="cj">渲染层网络层错误</span>] Failed to load image <u>http://localhost:8080/zhinengxiaochengxsc/img/logo.jpg</u></div>
<div class="m e" style="left:331.7px;top:379.9px">the server responded with a status of 404 (HTTP/1.1 404)</div>
<div class="m e" style="left:331.7px;top:389.2px">From server ::1</div>
<div class="m e" style="left:331.7px;top:398.5px">(env: Windows,mp,1.06.2412050; lib: 2.25.3)</div>
<div class="a" style="left:316px;top:408px;width:476px;height:41px;background:#290000;border-top:1px solid #5c0000"></div>
<svg style="left:321px;top:412.3px" width="6" height="6"><circle cx="3" cy="3" r="3" fill="#e9555a"/><path d="M1.8 1.8L4.2 4.2M4.2 1.8L1.8 4.2" stroke="#fff" stroke-width="0.8"/></svg>
<div class="m e" style="left:331.7px;top:411.6px">[<span class="cj">渲染层网络层错误</span>] Failed to load image <u>http://localhost:8080/zhinengxiaochengxsc/img/front-img-bg.jpg</u></div>
<div class="m e" style="left:331.7px;top:420.9px">the server responded with a status of 404 (HTTP/1.1 404)</div>
<div class="m e" style="left:331.7px;top:430.2px">From server ::1</div>
<div class="m e" style="left:331.7px;top:439.5px">(env: Windows,mp,1.06.2412050; lib: 2.25.3)</div>
<div class="a" style="left:316px;top:449px;width:476px;height:13px;background:#242424;border-top:1px solid #313131"></div>
<div class="m i" style="left:331.7px;top:453.1px">[system] Launch Time: 6053 ms</div>
<div class="a" style="left:316px;top:449px;width:476px;height:1px;background:#5c0000"></div>
<div class="a" style="left:316px;top:462px;width:476px;height:1px;background:#2e2e2e"></div>
<svg style="left:0;top:0" width="800" height="521"><path d="M321.5 465.6L324 468L321.5 470.4" fill="none" stroke="#4a8fe8" stroke-width="1"/></svg>
<div class="a" style="left:316px;top:486px;width:484px;height:1px;background:#3c3c3c"></div>
<div class="a" style="left:316px;top:487px;width:484px;height:16px;background:#292a2d"></div>
<svg style="left:0;top:0" width="800" height="521"><circle cx="327" cy="491.5" r="0.75" fill="#9a9a9a"/><circle cx="327" cy="494.8" r="0.75" fill="#9a9a9a"/><circle cx="327" cy="498.1" r="0.75" fill="#9a9a9a"/></svg>
<div class="a" style="left:334px;top:487px;width:41px;height:16px;background:#000"></div>
<div class="dt" style="left:340px;top:490px;">Console</div>
<div class="dt" style="left:380px;top:490px;">Task</div>
<svg style="left:787px;top:492px" width="7" height="6"><path d="M0 0L7 6M7 0L0 6" stroke="#ccc" stroke-width="1"/></svg>
<div class="a" style="left:316px;top:503px;width:484px;height:16px;background:#363636"></div>
<div class="ft" style="left:604px;top:507px;color:#b0b0b0;font-size:7.3px">行 31, 列 2 (选中 107)</div>
<div class="ft" style="left:685.5px;top:507px;color:#b0b0b0;font-size:7.3px">空格: 4</div>
<div class="ft" style="left:719px;top:507px;color:#b0b0b0;font-size:7.3px">UTF-8</div>
<div class="ft" style="left:749.5px;top:507px;color:#b0b0b0;font-size:7.3px">CRLF</div>
<div class="ft" style="left:776px;top:507px;color:#b0b0b0;font-size:7.3px">JSON</div>
</div>
</body></html>
